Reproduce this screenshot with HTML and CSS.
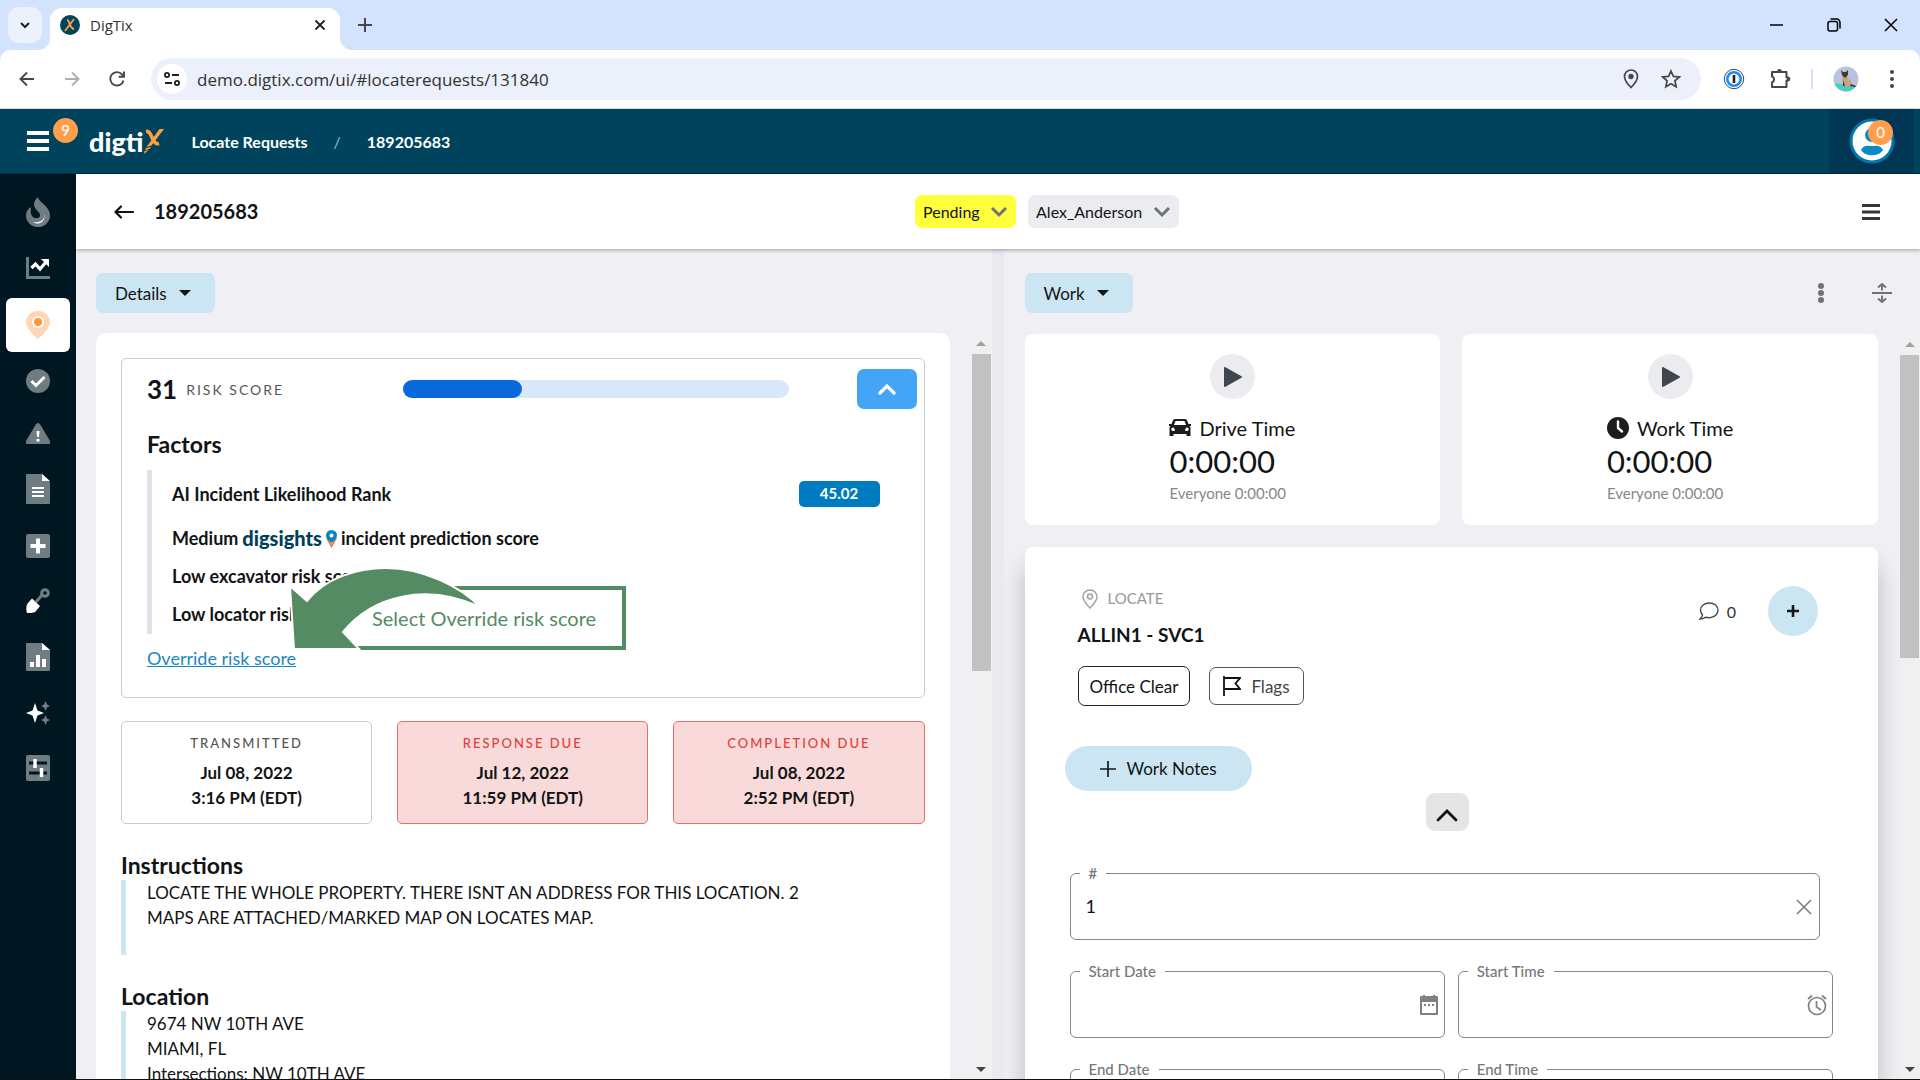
FILE: index.html
```html
<!DOCTYPE html>
<html lang="en">
<head>
    <meta charset="UTF-8">
    <meta name="viewport" content="width=device-width, initial-scale=1.0">
    <title>DigTix</title>
    <link rel="stylesheet" href="styles.css">
</head>
<body>

    <!-- Browser window -->
    <div class="tab-strip">
        <button class="tab-search" aria-label="Search tabs">
            <svg width="12" height="12" viewBox="0 0 12 12"><path d="M2 4l4 4 4-4" fill="none" stroke="#1f1f1f" stroke-width="2"/></svg>
        </button>
        <div class="tab">
            <svg width="20" height="20" viewBox="0 0 20 20"><circle cx="10" cy="10" r="10" fill="#00435c"/><path d="M7 5c2 0 2 3 3 5s2 4 4 4" fill="none" stroke="#ff9f43" stroke-width="1.8"/><path d="M14 4L5 16" stroke="#ff9f43" stroke-width="1.8"/></svg>
            <span class="tab-title">DigTix</span>
            <button class="icon-btn" aria-label="Close tab">
                <svg width="12" height="12" viewBox="0 0 12 12"><path d="M1.500 1.500l9 9m0-9l-9 9" stroke="#1f1f1f" stroke-width="1.800"/></svg>
            </button>
        </div>
        <button class="icon-btn new-tab" aria-label="New tab">
            <svg width="14" height="14" viewBox="0 0 14 14"><path d="M7 0v14M0 7h14" stroke="#474747" stroke-width="2"/></svg>
        </button>
        <div class="window-controls">
            <button class="icon-btn" aria-label="Minimize"><svg width="14" height="14" viewBox="0 0 14 14"><path d="M0 7h13" stroke="#000" stroke-width="1.500"/></svg></button>
            <button class="icon-btn" aria-label="Restore"><svg width="14" height="14" viewBox="0 0 14 14" fill="none" stroke="#000" stroke-width="1.500"><rect x="1" y="3.500" width="9.500" height="9.500" rx="2"/><path d="M3.500 1h6a3.500 3.500 0 0 1 3.500 3.500v6"/></svg></button>
            <button class="icon-btn" aria-label="Close"><svg width="14" height="14" viewBox="0 0 14 14"><path d="M1 1l12 12M13 1L1 13" stroke="#000" stroke-width="1.500"/></svg></button>
        </div>
    </div>

    <div class="toolbar">
        <div class="nav-buttons">
            <button class="icon-btn" aria-label="Back"><svg width="16" height="16" viewBox="0 0 16 16" fill="none" stroke="#474747" stroke-width="1.900"><path d="M15 8H2M8 1.500L1.500 8 8 14.500"/></svg></button>
            <button class="icon-btn" aria-label="Forward"><svg width="16" height="16" viewBox="0 0 16 16" fill="none" stroke="#aeaeae" stroke-width="1.900"><path d="M1 8h13M8 1.500L14.500 8 8 14.500"/></svg></button>
            <button class="icon-btn" aria-label="Reload"><svg width="16" height="16" viewBox="0 0 16 16" fill="none" stroke="#474747" stroke-width="1.900"><path d="M14.500 9.500A6.700 6.700 0 1 1 13 3.300L15 5.500M15 .5v5.300H9.700"/></svg></button>
        </div>
        <div class="address-bar">
            <button class="site-info" aria-label="Site information">
                <svg width="16" height="16" viewBox="0 0 16 16" fill="none" stroke="#1f1f1f" stroke-width="1.800"><circle cx="3" cy="4" r="2.100"/><path d="M8 4h7M1 12h7"/><circle cx="13" cy="12" r="2.100"/></svg>
            </button>
            <input class="address-input" type="text" aria-label="Address" value="demo.digtix.com/ui/#locaterequests/131840">
            <button class="icon-btn" aria-label="Location access"><svg width="16" height="20" viewBox="0 0 16 20"><path d="M8 1a6.500 6.500 0 0 0-6.500 6.500C1.500 12 8 18.500 8 18.500s6.500-6.500 6.500-11A6.500 6.500 0 0 0 8 1z" fill="none" stroke="#474747" stroke-width="1.700"/><circle cx="8" cy="7.500" r="2.700" fill="#474747"/></svg></button>
            <button class="icon-btn" aria-label="Bookmark this page"><svg width="20" height="20" viewBox="0 0 20 20"><path d="M10 2l2.400 5.400 5.900.6-4.400 3.900 1.300 5.800L10 14.700l-5.200 3 1.300-5.800L1.700 8l5.900-.6z" fill="none" stroke="#474747" stroke-width="1.700"/></svg></button>
        </div>
        <div class="extensions">
            <button class="icon-btn" aria-label="Password manager"><svg width="22" height="22" viewBox="0 0 22 22"><circle cx="11" cy="11" r="9.700" fill="#fff" stroke="#444" stroke-width="1"/><circle cx="11" cy="11" r="6.700" fill="#fff" stroke="#1a8cff" stroke-width="2.600"/><path d="M11 7v8" stroke="#222" stroke-width="2.600"/></svg></button>
            <button class="icon-btn" aria-label="Extensions"><svg width="22" height="22" viewBox="0 0 22 22"><path d="M3 4h14.500v5.500h1.300a1.500 1.500 0 0 1 0 3h-1.300V19H3v-4.500a3.200 3.200 0 0 0 0-6z" fill="none" stroke="#474747" stroke-width="2" stroke-linejoin="round"/><path d="M8 3.500a2.400 2.400 0 0 1 4.800 0zM18 8.500a2.400 2.400 0 0 1 0 5z" fill="#474747"/></svg></button>
            <span class="toolbar-divider"></span>
            <button class="icon-btn profile-btn" aria-label="Profile"><svg width="26" height="26" viewBox="0 0 26 26"><defs><clipPath id="avatarClip"><circle cx="13" cy="13" r="12.500"/></clipPath></defs><g clip-path="url(#avatarClip)"><path fill="#b9c2de" d="M0 0h26v26H0z"/><path fill="#47cfc0" d="M0 18c8-2 17 3 26 1v7H0z"/><path fill="#c5a582" d="M9 8h5l1 5c3 0 4 3 3 7l-8 1z"/><path fill="#46372f" d="M8 4l2 2h3l2-2v5l-3 3-3-3zM18 18l5 2-1 1-5-1zM10 14l2 6h-2z"/></g></svg></button>
            <button class="icon-btn" aria-label="Browser menu"><svg width="6" height="20" viewBox="0 0 6 20" fill="#474747"><circle cx="3" cy="3" r="2"/><circle cx="3" cy="10" r="2"/><circle cx="3" cy="17" r="2"/></svg></button>
        </div>
    </div>

    <!-- App header -->
    <header class="app-header">
        <button class="icon-btn menu-btn" aria-label="Main menu">
            <svg width="22" height="22" viewBox="0 0 22 22" fill="#fff"><path d="M0 1h22v4H0zM0 9h22v4H0zM0 17h22v4H0z"/></svg>
            <span class="badge menu-badge">9</span>
        </button>
        <a class="logo" href="#">digti<svg width="21" height="26" viewBox="0 0 21 26"><path d="M3 3.500c4-1 4.500 3.500 6.500 7s3 6 6.500 5" fill="none" stroke="#ff9f43" stroke-width="3.600"/><path d="M16.500 1H21L8.500 17.500 3.500 19zM3 20l5-1-1.500 2-4.500 1zM1.500 23l4-1L1 26z" fill="#ff9f43"/></svg></a>
        <nav class="breadcrumb">
            <a href="#">Locate Requests</a>
            <span class="slash">/</span>
            <a href="#">189205683</a>
        </nav>
        <button class="user-btn" aria-label="Account">
            <svg width="46" height="46" viewBox="0 0 46 46"><circle cx="23" cy="23" r="21" fill="#fff" stroke="#0077a8" stroke-width="3"/><circle cx="23" cy="17" r="7" fill="#0a8ac8"/><path d="M12 32c3-6 8-4 11-4s8-2 11 4c-4 7-18 7-22 0z" fill="#0a8ac8"/></svg>
            <span class="badge user-badge">0</span>
        </button>
    </header>

    <div class="app-body">
        <nav class="sidebar">
            <a href="#" aria-label="Hot list"><svg width="24" height="30" viewBox="0 0 24 30"><path d="M12 0C12 5 24 9 24 18.500A12 11.500 0 0 1 0 18.500C0 14.500 2 12 5 10C5 13 4 16 6 19C8 22 13 22 14 19C15 15 8 13 8 7C8 4 10 2 12 0z" fill="#6f7c82"/><path d="M17 14c4 6-1 13-10 11 7 5 15-3 10-11z" fill="#fff"/></svg></a>
            <a href="#" aria-label="Trends"><svg width="24" height="22" viewBox="0 0 24 22"><path d="M1.500 0v20.500H24" fill="none" stroke="#6f7c82" stroke-width="3"/><path d="M5.500 11l4-4 4.500 5 6-7" fill="none" stroke="#fff" stroke-width="3.200"/><path d="M15 2h8v8z" fill="#fff"/></svg></a>
            <a class="active" href="#" aria-label="Locate requests"><svg width="24" height="28" viewBox="0 0 24 28"><path d="M12 0a12 11.500 0 0 0-12 11.500C0 18 12 28 12 28s12-10 12-16.500A12 11.500 0 0 0 12 0z" fill="#ffd5b3"/><circle cx="12" cy="11" r="6" fill="#fff"/><circle cx="12" cy="11" r="4" fill="#ff963c"/></svg></a>
            <a href="#" aria-label="Completed"><svg width="24" height="24" viewBox="0 0 24 24"><circle cx="12" cy="12" r="12" fill="#6f7c82"/><path d="M5.500 12l4.500 4.500 8.500-8.500" fill="none" stroke="#fff" stroke-width="3"/></svg></a>
            <a href="#" aria-label="Alerts"><svg width="24" height="21" viewBox="0 0 24 21"><path d="M12 0c1 0 2 1 2.500 2L24 18c.5 2 0 3-2 3H2c-2 0-2.500-1-2-3L9.500 2c.5-1 1.500-2 2.500-2z" fill="#6f7c82"/><path d="M10.500 8h3l-.5 6h-2zM10.500 16h3v2.500h-3z" fill="#fff"/></svg></a>
            <a href="#" aria-label="Documents"><svg width="24" height="30" viewBox="0 0 24 30"><path d="M1 0h15l8 8v21a1 1 0 0 1-1 1H1a1 1 0 0 1-1-1V1a1 1 0 0 1 1-1z" fill="#6f7c82"/><path d="M16 0l8 7h-8zM6 13h12v2H6zM6 17h12v2H6zM6 21h12v2H6z" fill="#fff"/></svg></a>
            <a href="#" aria-label="Add"><svg width="24" height="24" viewBox="0 0 24 24"><rect width="24" height="24" rx="2" fill="#6f7c82"/><path d="M12 4.500v15M4.500 12h15" stroke="#fff" stroke-width="4"/></svg></a>
            <a href="#" aria-label="Excavation"><svg width="24" height="25" viewBox="0 0 24 25"><path d="M10 14l6-7" stroke="#6f7c82" stroke-width="3"/><circle cx="19" cy="5" r="3.300" fill="none" stroke="#6f7c82" stroke-width="3"/><path d="M6 10.500L14 18l-4 5c-1 2-6 2-9 2-1-3-1-8 1-10z" fill="#fff"/></svg></a>
            <a href="#" aria-label="Reports"><svg width="24" height="28" viewBox="0 0 24 28"><path d="M1 0h15l8 7v20a1 1 0 0 1-1 1H1a1 1 0 0 1-1-1V1a1 1 0 0 1 1-1z" fill="#6f7c82"/><path d="M16 0l8 7h-8zM4 19h4v5H4zM10 12h4v12h-4zM16 16h4v8h-4z" fill="#fff"/></svg></a>
            <a href="#" aria-label="Insights"><svg width="24" height="24" viewBox="0 0 24 24"><path d="M9 2l2.500 7.500L18 12l-6.500 2.500L9 22l-2.500-7.500L0 12l6.500-2.500z" fill="#fff"/><path d="M19.500 0l1.500 3.500L24 5l-3 1.500-1.500 3.500L18 6.500 15 5l3-1.500zM19.500 14l1.500 3.500 3 1.500-3 1.500-1.500 3.500-1.500-3.500-3-1.500 3-1.500z" fill="#6f7c82"/></svg></a>
            <a href="#" aria-label="Settings"><svg width="24" height="26" viewBox="0 0 24 26"><rect width="24" height="26" rx="2" fill="#6f7c82"/><path d="M3 8h18M3 18h18" stroke="#001721" stroke-width="3"/><path d="M9 4v9M15.500 13v9" stroke="#fff" stroke-width="3.500"/></svg></a>
        </nav>

        <main class="content">
            <div class="page-header">
                <div class="page-title">
                    <button class="icon-btn" aria-label="Go back"><svg width="20" height="14" viewBox="0 0 20 14" fill="none" stroke="#111" stroke-width="2.200" stroke-linecap="round" stroke-linejoin="round"><path d="M19 7H2M7 1.500L1.500 7 7 12.500"/></svg></button>
                    <h1>189205683</h1>
                </div>
                <div class="page-selects">
                    <select class="pill-select pending" aria-label="Status"><option>Pending</option></select>
                    <select class="pill-select" aria-label="Assignee"><option>Alex_Anderson</option></select>
                </div>
                <button class="icon-btn page-menu" aria-label="Page menu"><svg width="18" height="18" viewBox="0 0 18 18"><path d="M0 2.500h18M0 9h18M0 15.500h18" stroke="#33383e" stroke-width="2.800"/></svg></button>
            </div>

            <div class="panes">
                <section class="pane details-pane">
                    <div class="pane-bar">
                        <button class="menu-chip">Details <span class="caret"></span></button>
                    </div>
                    <div class="pane-scroll">
                        <div class="pane-content details-card">
                            <div class="risk-card">
                                <div class="risk-head">
                                    <div class="risk-score"><strong>31</strong> <span>Risk Score</span></div>
                                    <div class="risk-bar"><div class="risk-fill" style="width: 31%"></div></div>
                                    <button class="risk-toggle" aria-label="Collapse risk score"><svg width="18" height="12" viewBox="0 0 18 12"><path d="M2 10l7-7 7 7" fill="none" stroke="#fff" stroke-width="3.200" stroke-linecap="round"/></svg></button>
                                </div>
                                <h2>Factors</h2>
                                <ul class="factors">
                                    <li class="rank">AI Incident Likelihood Rank <span class="rank-value">45.02</span></li>
                                    <li>Medium <span class="digsights">digsights</span><svg class="digsights-pin" width="11" height="18" viewBox="0 0 11 18"><path d="M0 8l5.500 10L11 8z" fill="#ee6a5f"/><path d="M0 6l5.500 9L11 6z" fill="#ffc145"/><path d="M5.500 0A5.500 5.500 0 0 0 0 5.500C0 9 5.500 13 5.500 13S11 9 11 5.500A5.500 5.500 0 0 0 5.500 0z" fill="#0a84bf"/><circle cx="5.500" cy="5.500" r="2" fill="#fff"/></svg> incident prediction score</li>
                                    <li>Low excavator risk score</li>
                                    <li>Low locator risk score</li>
                                </ul>
                                <a class="override-link" href="#">Override risk score</a>
                                <div class="callout">Select Override risk score</div>
                                <svg class="callout-arrow" width="198" height="90" viewBox="0 0 198 90"><path d="M4 22L21 37C39 14 71 4 100 4C136 4 174 22 194 43C140 18 86 32 57 68L73 85L8 85Z" fill="#548b63" stroke="#fff" stroke-width="2"/></svg>
                            </div>

                            <div class="dates">
                                <div class="date-card">
                                    <span class="date-label">Transmitted</span>
                                    <span>Jul 08, 2022</span>
                                    <span>3:16 PM (EDT)</span>
                                </div>
                                <div class="date-card overdue">
                                    <span class="date-label">Response Due</span>
                                    <span>Jul 12, 2022</span>
                                    <span>11:59 PM (EDT)</span>
                                </div>
                                <div class="date-card overdue">
                                    <span class="date-label">Completion Due</span>
                                    <span>Jul 08, 2022</span>
                                    <span>2:52 PM (EDT)</span>
                                </div>
                            </div>

                            <h2>Instructions</h2>
                            <p class="quote">LOCATE THE WHOLE PROPERTY. THERE ISNT AN ADDRESS FOR THIS LOCATION. 2 MAPS ARE ATTACHED/MARKED MAP ON LOCATES MAP.</p>

                            <h2>Location</h2>
                            <p class="quote">9674 NW 10TH AVE<br>MIAMI, FL<br>Intersections: NW 10TH AVE</p>
                        </div>
                        <div class="scrollbar"><span class="arrow-up"></span><div class="track"><div class="thumb left-thumb"></div></div><span class="arrow-down"></span></div>
                    </div>
                </section>

                <div class="splitter"></div>

                <section class="pane work-pane">
                    <div class="pane-bar">
                        <button class="menu-chip">Work <span class="caret"></span></button>
                        <div class="pane-tools">
                            <button class="icon-btn" aria-label="More"><svg width="8" height="20" viewBox="0 0 8 20" fill="#707276"><circle cx="4" cy="3" r="3"/><circle cx="4" cy="10" r="3"/><circle cx="4" cy="17" r="3"/></svg></button>
                            <button class="icon-btn" aria-label="Expand rows"><svg width="20" height="20" viewBox="0 0 20 20" fill="none" stroke="#707276" stroke-width="1.900"><path d="M0 10h20M10 7.500V1M6 4.500L10 1l4 3.500M10 12.500V19M6 15.500l4 3.500 4-3.500"/></svg></button>
                        </div>
                    </div>
                    <div class="pane-scroll">
                        <div class="pane-content">
                            <div class="timers">
                                <div class="timer">
                                    <button class="play" aria-label="Start drive time"><svg width="18" height="20" viewBox="0 0 18 20"><path d="M1 1v18L17 10z" fill="#40464e" stroke="#40464e" stroke-width="2" stroke-linejoin="round"/></svg></button>
                                    <div class="timer-text">
                                        <span class="timer-name"><svg width="22" height="18" viewBox="0 0 22 18" fill="#1b1d1f"><path fill-rule="evenodd" d="M6 0h10c1.500 0 2 1 2.500 2.500L19.500 5H22v2h-1.500c1 .5 1 1.500 1 3v7h-4v-2h-13v2h-4v-7c0-1.500 0-2.500 1-3H0V5h2.500l1-2.500C4 1 4.500 0 6 0zm.5 2L5 6h12l-1.500-4zM4 8.500a1.700 1.700 0 1 0 0 3.400h1.500c1-1-.5-3.400-1.500-3.400zm14 0c-1 0-2.500 2.400-1.500 3.400H18a1.700 1.700 0 1 0 0-3.400z"/></svg> Drive Time</span>
                                        <span class="timer-value">0:00:00</span>
                                        <span class="timer-all">Everyone 0:00:00</span>
                                    </div>
                                </div>
                                <div class="timer">
                                    <button class="play" aria-label="Start work time"><svg width="18" height="20" viewBox="0 0 18 20"><path d="M1 1v18L17 10z" fill="#40464e" stroke="#40464e" stroke-width="2" stroke-linejoin="round"/></svg></button>
                                    <div class="timer-text">
                                        <span class="timer-name"><svg width="22" height="22" viewBox="0 0 22 22"><circle cx="11" cy="11" r="11" fill="#1b1d1f"/><path d="M11 4.500V11l4 3.500" fill="none" stroke="#fff" stroke-width="2.400" stroke-linecap="round"/></svg> Work Time</span>
                                        <span class="timer-value">0:00:00</span>
                                        <span class="timer-all">Everyone 0:00:00</span>
                                    </div>
                                </div>
                            </div>

                            <div class="task-card">
                                <div class="task-head">
                                    <div class="task-info">
                                        <span class="task-type"><svg width="16" height="20" viewBox="0 0 16 20" fill="none" stroke="#a3a3a3" stroke-width="1.500"><path d="M8 1a7 7 0 0 0-7 7c0 4 7 11 7 11s7-7 7-11a7 7 0 0 0-7-7z"/><circle cx="8" cy="7.500" r="2.500"/></svg> LOCATE</span>
                                        <h3>ALLIN1 - SVC1</h3>
                                        <div class="task-buttons">
                                            <button class="outline-btn">Office Clear</button>
                                            <button class="outline-btn flags"><svg width="18" height="20" viewBox="0 0 18 20" fill="none" stroke="#111" stroke-width="1.800"><path d="M1 0v20M1 2h16l-4.500 5.500L17 13H1"/></svg> Flags</button>
                                        </div>
                                    </div>
                                    <button class="comments"><svg width="20" height="18" viewBox="0 0 20 18"><path d="M10.500 1C5.500 1 1.500 4 1.500 8c0 2 .8 3.500 2 4.700C3.500 14 2.500 15.500 1 17c2.500 0 4-.8 5.500-1.700 6 1.500 12.500-1.500 12.500-7.300 0-4-3.800-7-8.500-7z" fill="none" stroke="#44484c" stroke-width="1.400"/></svg> 0</button>
                                    <button class="add-btn" aria-label="Add"><svg width="14" height="14" viewBox="0 0 14 14"><path d="M7 1v12M1 7h12" stroke="#15181a" stroke-width="2.600"/></svg></button>
                                </div>
                                <button class="notes-btn"><svg width="16" height="16" viewBox="0 0 16 16"><path d="M8 0v16M0 8h16" stroke="#15181a" stroke-width="1.700"/></svg> Work Notes</button>
                                <div class="collapse-row">
                                    <button class="collapse-btn" aria-label="Collapse"><svg width="22" height="14" viewBox="0 0 22 14"><path d="M2 12l9-9 9 9" fill="none" stroke="#111" stroke-width="2.800" stroke-linecap="round"/></svg></button>
                                </div>
                                <form class="task-form">
                                    <div class="field field-wide">
                                        <label for="number">#</label>
                                        <input type="text" id="number" value="1">
                                        <button type="button" class="icon-btn" aria-label="Clear"><svg width="16" height="16" viewBox="0 0 16 16"><path d="M1 1l14 14M15 1L1 15" stroke="#808080" stroke-width="1.600"/></svg></button>
                                    </div>
                                    <div class="field">
                                        <label for="startDate">Start Date</label>
                                        <input type="text" id="startDate">
                                        <button type="button" class="icon-btn" aria-label="Pick start date"><svg width="20" height="22" viewBox="0 0 20 22"><path d="M2 3h16v17H2z" fill="none" stroke="#808080" stroke-width="2" stroke-linejoin="round"/><path d="M1 3h18v5H1zM4 1h2v3H4zM14 1h2v3h-2zM5 10h2v2H5zM9 10h2v2H9zM13 10h2v2h-2z" fill="#808080"/></svg></button>
                                    </div>
                                    <div class="field">
                                        <label for="startTime">Start Time</label>
                                        <input type="text" id="startTime">
                                        <button type="button" class="icon-btn" aria-label="Pick start time"><svg width="20" height="22" viewBox="0 0 20 22" fill="none" stroke="#808080" stroke-width="1.700"><circle cx="10" cy="12" r="8.500"/><path d="M9.500 7v6l4.500 3M1 5l4-3.500M19 5l-4-3.500"/></svg></button>
                                    </div>
                                    <div class="field">
                                        <label for="endDate">End Date</label>
                                        <input type="text" id="endDate">
                                    </div>
                                    <div class="field">
                                        <label for="endTime">End Time</label>
                                        <input type="text" id="endTime">
                                    </div>
                                </form>
                            </div>
                        </div>
                        <div class="scrollbar"><span class="arrow-up"></span><div class="track"><div class="thumb right-thumb"></div></div><span class="arrow-down"></span></div>
                    </div>
                </section>
            </div>
        </main>
    </div>

</body>
</html>
```
FILE: styles.css
```css
* {
    box-sizing: border-box;
}

body {
    margin: 0;
    height: 100vh;
    display: flex;
    flex-direction: column;
    overflow: hidden;
    font-family: Lato, "Liberation Sans", sans-serif;
    font-size: 17px;
    line-height: 25px;
    color: #111415;
    background-color: #d3e2fd;
    border-bottom: 1px solid #111;
}

h1, h2, h3, p, ul {
    margin: 0;
    padding: 0;
}

button, input, select {
    font: inherit;
    color: inherit;
}

button {
    cursor: pointer;
}

a {
    color: inherit;
    text-decoration: none;
}

svg {
    display: block;
    flex-shrink: 0;
}

.icon-btn {
    display: flex;
    align-items: center;
    justify-content: center;
    padding: 0;
    border: none;
    background: none;
}

/* Browser window */
.tab-strip {
    display: flex;
    align-items: center;
    height: 50px;
    flex-shrink: 0;
    padding-left: 8px;
    font-family: "Open Sans", "Noto Sans", sans-serif;
}

.tab-search {
    display: flex;
    align-items: center;
    justify-content: center;
    width: 34px;
    height: 36px;
    margin-right: 8px;
    padding: 0;
    border: none;
    border-radius: 11px;
    background-color: #ebf2fe;
}

.tab {
    position: relative;
    display: flex;
    align-items: center;
    gap: 10px;
    width: 290px;
    height: 42px;
    align-self: flex-end;
    padding: 0 14px 8px 10px;
    border-radius: 12px 12px 0 0;
    background-color: #fff;
}

/* flared feet of the tab */
.tab::before, .tab::after {
    content: "";
    position: absolute;
    bottom: 0;
    width: 12px;
    height: 12px;
}

.tab::before {
    right: 100%;
    background: radial-gradient(circle at 0 0, transparent 12px, #fff 12px);
}

.tab::after {
    left: 100%;
    background: radial-gradient(circle at 100% 0, transparent 12px, #fff 12px);
}

.tab-title {
    flex: 1;
    font-size: 15px;
    color: #333;
}

.new-tab {
    margin-left: 18px;
}

.window-controls {
    display: flex;
    gap: 43px;
    margin-left: auto;
    padding-right: 22px;
}

.toolbar {
    display: flex;
    align-items: center;
    height: 59px;
    flex-shrink: 0;
    border-bottom: 1px solid #d5d8d8;
    border-radius: 10px 10px 0 0;
    background-color: #fff;
}

.nav-buttons {
    display: flex;
    gap: 29px;
    padding: 0 26px 0 19px;
}

.address-bar {
    display: flex;
    align-items: center;
    gap: 22px;
    flex: 1;
    height: 42px;
    padding: 0 20px 0 6px;
    border-radius: 21px;
    background-color: #ebf0fa;
}

.site-info {
    display: flex;
    align-items: center;
    justify-content: center;
    width: 30px;
    height: 30px;
    padding: 0;
    border: none;
    border-radius: 50%;
    background-color: #fff;
}

.address-input {
    flex: 1;
    margin-left: -12px;
    padding: 0;
    border: none;
    outline: none;
    background: none;
    font-family: "Open Sans", "Noto Sans", sans-serif;
    font-size: 17px;
    color: #333;
}

.extensions {
    display: flex;
    align-items: center;
    gap: 24px;
    padding: 0 25px 0 22px;
}

.toolbar-divider {
    width: 2px;
    height: 20px;
    margin: 0 -4px;
    background-color: #d3e2fd;
}

.profile-btn {
    margin-right: 6px;
}

/* App header */
.app-header {
    display: flex;
    align-items: center;
    height: 65px;
    flex-shrink: 0;
    padding-left: 27px;
    background-color: #00435c;
    color: #fff;
    border-bottom: 1px solid #003348;
}

.menu-btn {
    position: relative;
}

.badge {
    position: absolute;
    width: 25px;
    height: 25px;
    border-radius: 50%;
    background-color: #ff9f4c;
    color: #fff;
    font-size: 15px;
    text-align: center;
}

.menu-badge {
    left: 26px;
    top: -12px;
}

.logo {
    display: flex;
    align-items: center;
    margin-left: 40px;
    font-size: 27px;
    font-weight: 900;
}

.breadcrumb {
    display: flex;
    gap: 26px;
    margin-left: 27px;
    font-size: 16px;
    font-weight: 700;
}

.slash {
    color: #6cc5ee;
    font-weight: 400;
}

.user-btn {
    position: relative;
    display: flex;
    align-items: center;
    justify-content: center;
    align-self: stretch;
    width: 85px;
    margin: 0 6px 0 auto;
    padding: 0;
    border: none;
    background-color: #003654;
}

.user-badge {
    right: 21px;
    top: 11px;
}

/* Sidebar */
.app-body {
    display: flex;
    flex: 1;
    min-height: 0;
}

.sidebar {
    display: flex;
    flex-direction: column;
    align-items: center;
    gap: 30px;
    width: 76px;
    flex-shrink: 0;
    padding-top: 23px;
    background-color: #001721;
}

.sidebar .active {
    margin: -11px 0 -13px;
    padding: 13px 20px;
    border-radius: 6px;
    background-color: #fff;
}

/* Page header */
.content {
    display: flex;
    flex-direction: column;
    flex: 1;
    min-width: 0;
}

.page-header {
    display: grid;
    grid-template-columns: 8fr auto 7fr;
    align-items: center;
    height: 75px;
    flex-shrink: 0;
    padding: 0 40px 0 38px;
    background-color: #fff;
    box-shadow: 0 1px 4px rgba(0, 0, 0, 0.35);
    z-index: 1;
}

.page-title {
    display: flex;
    align-items: center;
    gap: 20px;
}

h1 {
    font-size: 20px;
}

.page-selects {
    display: flex;
    gap: 12px;
}

.pill-select {
    appearance: none;
    height: 33px;
    padding: 0 36px 0 8px;
    border: none;
    border-radius: 7px;
    background: #ebecf0 url("data:image/svg+xml,%3Csvg xmlns='http://www.w3.org/2000/svg' width='18' height='12'%3E%3Cpath d='M2 2l7 7 7-7' fill='none' stroke='%23707276' stroke-width='3'/%3E%3C/svg%3E") no-repeat right 8px center;
    font-size: 16px;
}

.pill-select.pending {
    background-color: #ffff3c;
}

.page-menu {
    justify-self: end;
}

/* Panes */
.panes {
    display: flex;
    flex: 1;
    min-height: 0;
    background-color: #efeff4;
}

.pane {
    display: flex;
    flex-direction: column;
    padding-top: 24px;
}

.details-pane {
    flex: 916;
    padding-left: 20px;
}

.work-pane {
    flex: 916;
    min-width: 0;
    padding-left: 21px;
}

.splitter {
    width: 12px;
    background-color: #e9eaef;
}

.pane-bar {
    display: flex;
    align-items: center;
    justify-content: space-between;
    margin-bottom: 21px;
    padding-right: 28px;
}

.details-pane .pane-bar {
    margin-bottom: 20px;
}

.menu-chip {
    display: flex;
    align-items: center;
    gap: 12px;
    height: 40px;
    padding: 0 24px 0 19px;
    border: none;
    border-radius: 7px;
    background-color: #cce5f2;
}

.caret {
    border: 6px solid transparent;
    border-top-color: #111415;
    border-bottom: none;
}

.pane-tools {
    display: flex;
    gap: 47px;
}

.pane-scroll {
    display: flex;
    flex: 1;
    gap: 21px;
    min-height: 0;
    overflow: hidden;
}

.work-pane .pane-scroll {
    margin-left: -21px;
    padding-left: 21px;
}

.pane-content {
    flex: 1;
    min-width: 0;
}

.scrollbar {
    display: flex;
    flex-direction: column;
    align-items: center;
    justify-content: space-between;
    width: 21px;
    padding: 8px 1px 7px;
    background-color: #f0f0f0;
    z-index: 1;
}

.track {
    flex: 1;
    align-self: stretch;
    margin: 8px 0;
}

.thumb {
    background-color: #c1c1c1;
}

.left-thumb {
    height: 45%;
}

.right-thumb {
    height: 43%;
}

.arrow-up, .arrow-down {
    border: 5px solid transparent;
}

.arrow-up {
    border-bottom-color: #a0a0a0;
    border-top: none;
}

.arrow-down {
    border-top-color: #444;
    border-bottom: none;
}

/* Details */
.details-card {
    padding: 25px;
    border-radius: 10px 10px 0 0;
    background-color: #fff;
}

h2 {
    font-size: 23px;
    line-height: 30px;
}

.risk-card {
    position: relative;
    height: 340px;
    margin-bottom: 23px;
    padding: 10px 7px 0 25px;
    border: 1px solid #ccc;
    border-radius: 5px;
}

.risk-head {
    display: flex;
    align-items: center;
    margin-bottom: 20px;
}

.risk-score {
    display: flex;
    align-items: center;
    gap: 9px;
    flex: 256;
}

.risk-score strong {
    font-size: 26px;
}

.risk-score span {
    color: #555;
    font-size: 14px;
    letter-spacing: 2px;
    text-transform: uppercase;
}

.risk-bar {
    flex: 386;
    height: 18px;
    margin-right: 68px;
    border-radius: 9px;
    background-color: #d9e8f9;
}

.risk-fill {
    height: 100%;
    border-radius: 9px;
    background-color: #0869da;
}

.risk-toggle {
    display: flex;
    align-items: center;
    justify-content: center;
    width: 60px;
    height: 40px;
    border: none;
    border-radius: 7px;
    background-color: #42a5f5;
}

.factors {
    display: flex;
    flex-direction: column;
    gap: 13px;
    margin: 11px 37px 12px 0;
    padding: 11px 0 7px 20px;
    border-left: 5px solid #e0e0e6;
    list-style: none;
    font-size: 18px;
    font-weight: 700;
}

.factors li {
    display: flex;
    align-items: center;
    gap: 4px;
}

.factors .rank {
    justify-content: space-between;
    margin-bottom: 6px;
}

.rank-value {
    width: 81px;
    height: 26px;
    border-radius: 5px;
    background-color: #007bbf;
    color: #fff;
    font-size: 15px;
    text-align: center;
}

.digsights {
    color: #003f5c;
    font-size: 20px;
    font-weight: 900;
}

.override-link {
    color: #1b87c4;
    font-size: 18px;
    text-decoration: underline;
}

.callout {
    position: absolute;
    left: 236px;
    top: 227px;
    width: 268px;
    height: 64px;
    padding: 16px 0 0 14px;
    border: 4px solid #548b63;
    border-left: none;
    background-color: #fff;
    color: #548b63;
    font-size: 20px;
    white-space: nowrap;
}

.callout-arrow {
    position: absolute;
    left: 164px;
    top: 205px;
}

.dates {
    display: grid;
    grid-template-columns: repeat(3, 1fr);
    gap: 25px;
    margin-bottom: 26px;
}

.date-card {
    display: flex;
    flex-direction: column;
    align-items: center;
    height: 103px;
    padding-top: 9px;
    border: 1px solid #ccc;
    border-radius: 5px;
    font-weight: 700;
}

.date-label {
    margin-bottom: 4px;
    color: #555;
    font-size: 13px;
    font-weight: 500;
    letter-spacing: 2px;
    text-transform: uppercase;
}

.overdue {
    border-color: #ee6a65;
    background-color: #f9dada;
}

.overdue .date-label {
    color: #e04038;
}

.quote {
    min-height: 75px;
    margin-bottom: 26px;
    padding: 0 90px 0 21px;
    border-left: 5px solid #cce5f2;
}

/* Work */
.timers {
    display: grid;
    grid-template-columns: 1fr 1fr;
    gap: 22px;
    margin-bottom: 22px;
}

.timer {
    display: flex;
    flex-direction: column;
    align-items: center;
    gap: 14px;
    height: 191px;
    padding-top: 20px;
    border-radius: 8px;
    background-color: #fff;
}

.play {
    display: flex;
    align-items: center;
    justify-content: center;
    width: 45px;
    height: 45px;
    padding: 0 0 0 2px;
    border: none;
    border-radius: 50%;
    background-color: #ebecf0;
}

.timer-text {
    display: flex;
    flex-direction: column;
}

.timer-name {
    display: flex;
    align-items: center;
    gap: 8px;
    font-size: 20px;
    line-height: 30px;
}

.timer-value {
    font-size: 31px;
    line-height: 36px;
}

.timer-all {
    color: #85878a;
    font-size: 15px;
    line-height: 28px;
}

.task-card {
    padding: 39px 45px;
    border-radius: 8px;
    background-color: #fff;
    box-shadow: 0 20px 24px rgba(0, 0, 0, 0.22);
}

.task-head {
    display: flex;
    align-items: flex-start;
    padding: 0 15px 0 8px;
    margin-bottom: 40px;
}

.task-info {
    flex: 1;
}

.task-type {
    display: flex;
    align-items: center;
    gap: 10px;
    margin-bottom: 11px;
    padding-left: 4px;
    color: #999;
    font-size: 15px;
}

h3 {
    margin-bottom: 19px;
    font-size: 19px;
}

.task-buttons {
    display: flex;
    align-items: center;
    gap: 19px;
}

.outline-btn {
    display: flex;
    align-items: center;
    gap: 10px;
    height: 40px;
    padding: 0 11px;
    border: 1px solid #222;
    border-radius: 7px;
    background-color: #fff;
}

.flags {
    height: 38px;
    padding: 0 13px;
    border-color: #555;
    color: #444;
}

.comments {
    display: flex;
    align-items: center;
    gap: 8px;
    height: 50px;
    margin-right: 26px;
    border: none;
    background: none;
    font-size: 16px;
    color: #333;
}

.add-btn {
    display: flex;
    align-items: center;
    justify-content: center;
    width: 50px;
    height: 50px;
    border: none;
    border-radius: 50%;
    background-color: #cce5f2;
}

.notes-btn {
    display: flex;
    align-items: center;
    gap: 11px;
    height: 45px;
    margin-left: -5px;
    padding: 0 35px;
    border: none;
    border-radius: 23px;
    background-color: #cce5f2;
}

.collapse-row {
    display: flex;
    justify-content: center;
    margin: 2px 0 42px;
    padding-right: 8px;
}

.collapse-btn {
    display: flex;
    align-items: center;
    justify-content: center;
    width: 43px;
    height: 38px;
    padding: 6px 0 0;
    border: none;
    border-radius: 9px;
    background-color: #e5e5e5;
}

.task-form {
    display: grid;
    grid-template-columns: 1fr 1fr;
    gap: 31px 13px;
}

.field {
    position: relative;
    display: flex;
    align-items: center;
    height: 67px;
    padding: 0 5px 0 15px;
    border: 1px solid #858585;
    border-radius: 6px;
}

.field-wide {
    grid-column: 1 / -1;
    margin-right: 13px;
    padding-right: 7px;
}

/* the label sits over the top border of its field */
.field label {
    position: absolute;
    left: 9px;
    top: -13px;
    padding: 0 9px;
    background-color: #fff;
    color: #75777a;
    font-size: 15px;
    font-weight: 500;
}

.field input {
    flex: 1;
    min-width: 0;
    padding: 0;
    border: none;
    outline: none;
    background: none;
    font-size: 18px;
}
```
